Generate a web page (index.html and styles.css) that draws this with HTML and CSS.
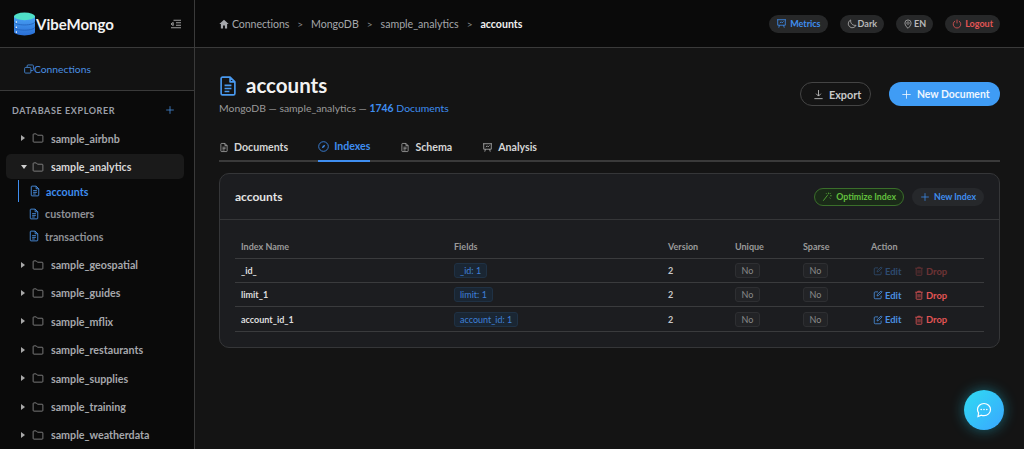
FILE: index.html
```html
<!DOCTYPE html>
<html lang="en">
<head>
    <meta charset="UTF-8">
    <meta name="viewport" content="width=device-width, initial-scale=1.0">
    <title>VibeMongo</title>
    <link rel="stylesheet" href="styles.css">
</head>
<body>
    <svg class="sprites" width="0" height="0">
        <symbol id="i-folder" viewBox="0 0 16 16"><path d="M1.5 3.500a1 1 0 0 1 1-1h3.200l1.600 1.800h6.200a1 1 0 0 1 1 1v7.200a1 1 0 0 1-1 1h-11a1 1 0 0 1-1-1z" fill="none" stroke="currentColor" stroke-width="1.100"/></symbol>
        <symbol id="i-doc" viewBox="0 0 16 16"><path d="M3 2.500a1 1 0 0 1 1-1h5.500L13 5v8.500a1 1 0 0 1-1 1H4a1 1 0 0 1-1-1zM9.500 1.500V5H13M5.500 7.500h5M5.500 9.800h5M5.500 12h3.500" fill="none" stroke="currentColor" stroke-width="1.200" stroke-linejoin="round"/></symbol>
        <symbol id="i-plus" viewBox="0 0 16 16"><path d="M8 2.500v11M2.500 8h11" fill="none" stroke="currentColor" stroke-width="1.200" stroke-linecap="round"/></symbol>
        <symbol id="i-edit" viewBox="0 0 16 16"><path d="M13 9v3.500a1.500 1.500 0 0 1-1.500 1.500h-8A1.500 1.500 0 0 1 2 12.500v-8A1.500 1.500 0 0 1 3.500 3H8M6.500 9.500l.5-2.500 6-5.500 1.500 1.500-6 6z" fill="none" stroke="currentColor" stroke-width="1.300" stroke-linejoin="round"/></symbol>
        <symbol id="i-trash" viewBox="0 0 16 16"><path d="M2 3.500h12M6 3.500V2h4v1.500M3.500 3.500V14a.8.8 0 0 0 .8.8h7.400a.8.8 0 0 0 .8-.8V3.500M6.500 6.500V12M9.500 6.500V12" fill="none" stroke="currentColor" stroke-width="1.300"/></symbol>
        <symbol id="i-board" viewBox="0 0 16 16"><path d="M1.500 2.500h13M2.500 2.500v8h11v-8M5 10.500l-1 3.500M11 10.500l1 3.500M5.500 7.500l2-2L9 7l2-2" fill="none" stroke="currentColor" stroke-width="1.200" stroke-linejoin="round"/></symbol>
    </svg>

    <!-- Sidebar -->
    <aside class="sidebar">
        <div class="brand">
            <svg class="brand-logo" viewBox="0 0 22 24" width="21" height="24">
                <defs>
                    <linearGradient id="dbBody" x1="0" y1="0" x2="0" y2="1"><stop offset="0" stop-color="#4aa3f5"/><stop offset="1" stop-color="#2a6fd6"/></linearGradient>
                </defs>
                <path d="M0 3.500v17C0 22.400 5 24 11 24s11-1.600 11-3.500v-17z" fill="url(#dbBody)"/>
                <ellipse cx="11" cy="4" rx="11" ry="4" fill="#4fe0c8"/>
                <path d="M0 9.500c0 2 5 3.500 11 3.500s11-1.500 11-3.500M0 15c0 2 5 3.500 11 3.500S22 17 22 15" fill="none" stroke="#1f5fb8" stroke-width=".8"/>
                <circle cx="2.500" cy="10" r=".8" fill="#fff"/><circle cx="2.500" cy="15.500" r=".8" fill="#fff"/><circle cx="2.500" cy="20.500" r=".8" fill="#fff"/>
            </svg>
            <span class="brand-name">VibeMongo</span>
            <svg class="brand-toggle" viewBox="0 0 16 16" width="10" height="10"><path d="M4 2h12M8 6h8M8 10h8M0 14h16M0 8l3.500-2.500v5z" fill="none" stroke="currentColor" stroke-width="1.400"/></svg>
        </div>
        <div class="side-link">
            <svg viewBox="0 0 16 16" width="10" height="10"><path d="M5 5V3a1.500 1.500 0 0 1 1.500-1.500h7A1.500 1.500 0 0 1 15 3v6a1.500 1.500 0 0 1-1.500 1.500H11M1 7a1.500 1.500 0 0 1 1.500-1.500h7A1.500 1.500 0 0 1 11 7v6a1.500 1.500 0 0 1-1.500 1.500h-7A1.500 1.500 0 0 1 1 13z" fill="none" stroke="currentColor" stroke-width="1.300"/></svg>
            <span>Connections</span>
        </div>
        <div class="explorer-head">
            <span>DATABASE EXPLORER</span>
            <svg class="explorer-add" width="10" height="10"><use href="#i-plus"/></svg>
        </div>
        <ul class="tree">
            <li class="db"><i class="caret"></i><svg width="12" height="12"><use href="#i-folder"/></svg><span>sample_airbnb</span></li>
            <li class="db db-open"><i class="caret caret-down"></i><svg width="12" height="12"><use href="#i-folder"/></svg><span>sample_analytics</span></li>
            <li class="coll coll-active"><svg width="12" height="12"><use href="#i-doc"/></svg><span>accounts</span></li>
            <li class="coll"><svg width="12" height="12"><use href="#i-doc"/></svg><span>customers</span></li>
            <li class="coll coll-last"><svg width="12" height="12"><use href="#i-doc"/></svg><span>transactions</span></li>
            <li class="db"><i class="caret"></i><svg width="12" height="12"><use href="#i-folder"/></svg><span>sample_geospatial</span></li>
            <li class="db"><i class="caret"></i><svg width="12" height="12"><use href="#i-folder"/></svg><span>sample_guides</span></li>
            <li class="db"><i class="caret"></i><svg width="12" height="12"><use href="#i-folder"/></svg><span>sample_mflix</span></li>
            <li class="db"><i class="caret"></i><svg width="12" height="12"><use href="#i-folder"/></svg><span>sample_restaurants</span></li>
            <li class="db"><i class="caret"></i><svg width="12" height="12"><use href="#i-folder"/></svg><span>sample_supplies</span></li>
            <li class="db"><i class="caret"></i><svg width="12" height="12"><use href="#i-folder"/></svg><span>sample_training</span></li>
            <li class="db"><i class="caret"></i><svg width="12" height="12"><use href="#i-folder"/></svg><span>sample_weatherdata</span></li>
        </ul>
    </aside>

    <div class="main">
        <!-- Top bar -->
        <header class="topbar">
            <nav class="crumbs">
                <svg viewBox="0 0 16 16" width="10" height="10"><path d="M8 1 .5 8H3v7h3.500v-4.500h3V15H13V8h2.500z" fill="currentColor"/></svg>
                <span class="crumb-first">Connections</span>
                <span class="sep">&gt;</span><span>MongoDB</span>
                <span class="sep">&gt;</span><span>sample_analytics</span>
                <span class="sep">&gt;</span><b>accounts</b>
            </nav>
            <div class="top-actions">
                <span class="pill pill-blue"><svg width="11" height="11"><use href="#i-board"/></svg>Metrics</span>
                <span class="pill pill-tight"><svg viewBox="0 0 16 16" width="10" height="10"><path d="M6 1.500a6.500 6.500 0 1 0 8.500 8.500A7 7 0 0 1 6 1.500z" fill="none" stroke="currentColor" stroke-width="1.200"/></svg>Dark</span>
                <span class="pill pill-tight"><svg viewBox="0 0 16 16" width="10" height="10"><path d="M8 15s5-4.500 5-8.500a5 5 0 0 0-10 0C3 10.500 8 15 8 15z" fill="none" stroke="currentColor" stroke-width="1.200"/><circle cx="8" cy="6.500" r="2" fill="none" stroke="currentColor"/></svg>EN</span>
                <span class="pill pill-red"><svg viewBox="0 0 16 16" width="10" height="10"><path d="M5 3.200a6 6 0 1 0 6 0M8 1v6" fill="none" stroke="currentColor" stroke-width="1.300"/></svg>Logout</span>
            </div>
        </header>

        <main class="content">
            <div class="page-head">
                <div>
                    <h1><svg width="22" height="22"><use href="#i-doc"/></svg>accounts</h1>
                    <p class="subtitle">MongoDB — sample_analytics — <b>1746</b> <span>Documents</span></p>
                </div>
                <div class="head-actions">
                    <button class="btn btn-outline"><svg viewBox="0 0 16 16" width="11" height="11"><path d="M8 1.500V10M4.500 6.800 8 10.300l3.500-3.500M2 14h12" fill="none" stroke="currentColor" stroke-width="1.200"/></svg>Export</button>
                    <button class="btn btn-primary"><svg width="11" height="11"><use href="#i-plus"/></svg>New Document</button>
                </div>
            </div>

            <div class="tabs">
                <span class="tab"><svg width="10" height="11"><use href="#i-doc"/></svg>Documents</span>
                <span class="tab tab-active"><svg viewBox="0 0 16 16" width="11" height="11"><circle cx="8" cy="8" r="7" fill="none" stroke="currentColor" stroke-width="1.200"/><path d="M5.500 10.500 7 7l3.500-1.500L9 9z" fill="currentColor"/></svg>Indexes</span>
                <span class="tab"><svg width="10" height="11"><use href="#i-doc"/></svg>Schema</span>
                <span class="tab"><svg width="11" height="11"><use href="#i-board"/></svg>Analysis</span>
            </div>

            <section class="card">
                <div class="card-head">
                    <h2>accounts</h2>
                    <div class="card-actions">
                        <span class="chip chip-green"><svg viewBox="0 0 16 16" width="10" height="10"><path d="M9 5 2 14M10.500 1v2.500M13 6h2.500M12.500 3 14 1.500M6.500 2 8 3.500M12 9l1.500 1.500" fill="none" stroke="currentColor" stroke-width="1.200"/></svg>Optimize Index</span>
                        <span class="chip chip-blue"><svg width="10" height="10"><use href="#i-plus"/></svg>New Index</span>
                    </div>
                </div>
                <div class="card-body">
                    <table class="idx">
                        <thead>
                            <tr><th class="c-name">Index Name</th><th class="c-fields">Fields</th><th class="c-ver">Version</th><th class="c-flag">Unique</th><th class="c-flag">Sparse</th><th>Action</th></tr>
                        </thead>
                        <tbody>
                            <tr class="locked">
                                <td class="name">_id_</td><td><span class="field">_id: 1</span></td><td>2</td><td><span class="flag">No</span></td><td><span class="flag">No</span></td>
                                <td><span class="act act-edit"><svg width="10" height="10"><use href="#i-edit"/></svg>Edit</span><span class="act act-drop"><svg width="10" height="10"><use href="#i-trash"/></svg>Drop</span></td>
                            </tr>
                            <tr>
                                <td class="name">limit_1</td><td><span class="field">limit: 1</span></td><td>2</td><td><span class="flag">No</span></td><td><span class="flag">No</span></td>
                                <td><span class="act act-edit"><svg width="10" height="10"><use href="#i-edit"/></svg>Edit</span><span class="act act-drop"><svg width="10" height="10"><use href="#i-trash"/></svg>Drop</span></td>
                            </tr>
                            <tr>
                                <td class="name">account_id_1</td><td><span class="field">account_id: 1</span></td><td>2</td><td><span class="flag">No</span></td><td><span class="flag">No</span></td>
                                <td><span class="act act-edit"><svg width="10" height="10"><use href="#i-edit"/></svg>Edit</span><span class="act act-drop"><svg width="10" height="10"><use href="#i-trash"/></svg>Drop</span></td>
                            </tr>
                        </tbody>
                    </table>
                </div>
            </section>
        </main>
    </div>

    <!-- Chat button floats over the page -->
    <button class="chat-fab">
        <svg viewBox="0 0 16 16" width="16" height="16"><path d="M8 1.500c-3.600 0-6.500 2.700-6.500 6 0 1.300.4 2.400 1.100 3.400L2 14.500l3.300-1.300c.8.300 1.700.5 2.700.5 3.600 0 6.500-2.800 6.500-6.200S11.600 1.500 8 1.500z" fill="none" stroke="#fff" stroke-width="1.200"/><circle cx="5.200" cy="7.500" r=".8" fill="#fff"/><circle cx="8" cy="7.500" r=".8" fill="#fff"/><circle cx="10.800" cy="7.500" r=".8" fill="#fff"/></svg>
    </button>
</body>
</html>
```
FILE: styles.css
```css
* {
    box-sizing: border-box;
}
html, body {
    height: 100%;
}
body {
    margin: 0;
    display: flex;
    overflow: hidden;
    background-color: #141414;
    color: #e6e6e6;
    font-family: Lato, "Liberation Sans", sans-serif;
    font-size: 11px;
}
svg {
    flex-shrink: 0;
}
.sprites {
    position: absolute;
}

/* Sidebar */
.sidebar {
    width: 195px;
    flex-shrink: 0;
    height: 100%;
    overflow: hidden;
    background-color: #0a0a0a;
    border-right: 1px solid #3a3a3a;
}
.brand {
    height: 48px;
    display: flex;
    align-items: center;
    padding: 0 14px;
    border-bottom: 1px solid #3a3a3a;
}
.brand-name {
    margin-left: 1px;
    font-size: 15px;
    font-weight: 700;
    color: #f2f2f2;
}
.brand-toggle {
    margin-left: auto;
    margin-right: -1px;
    color: #b5b5b5;
}
.side-link {
    height: 43px;
    display: flex;
    align-items: center;
    padding-left: 24px;
    color: #4a90e2;
    background-color: #121212;
    border-bottom: 1px solid #3a3a3a;
    font-size: 10.3px;
}
.explorer-head {
    display: flex;
    align-items: center;
    justify-content: space-between;
    padding: 5px 19px 0 12px;
    height: 33px;
    font-size: 9px;
    font-weight: 700;
    letter-spacing: .6px;
    color: #9a9fa8;
}
.explorer-add {
    color: #4a90e2;
}
.tree {
    list-style: none;
    margin: 0;
    padding: 0;
}
.db {
    height: 28.4px;
    margin: 0 10px 0 6px;
    padding-left: 15px;
    display: flex;
    align-items: center;
    color: #a6a8ad;
    font-size: 10.7px;
    font-weight: 700;
    border-radius: 5px;
}
.db svg {
    margin-left: 7px;
    margin-right: 7px;
    color: #8f8f8f;
}
.db-open {
    height: 25px;
    margin-top: 2px;
    color: #d8d8d8;
    background-color: #1a1a1a;
}
.caret {
    width: 0;
    height: 0;
    border-top: 3px solid transparent;
    border-bottom: 3px solid transparent;
    border-left: 4px solid #a8a8a8;
}
.caret-down {
    margin-right: -2px;
    border-left: 3px solid transparent;
    border-right: 3px solid transparent;
    border-top: 4px solid #d0d0d0;
    border-bottom: 0;
}
.coll {
    height: 22.5px;
    margin-left: 18px;
    padding-left: 10px;
    display: flex;
    align-items: center;
    gap: 5px;
    color: #8f9196;
    font-size: 10.7px;
    font-weight: 700;
}
.coll svg {
    color: #4a90e2;
}
.coll-active {
    height: 22px;
    color: #3f8ef0;
    border-left: 1px solid #3f8ef0;
    margin-top: 1px;
}
.coll-last {
    margin-bottom: 3px;
}

/* Top bar */
.main {
    flex: 1;
    min-width: 0;
    display: flex;
    flex-direction: column;
}
.topbar {
    height: 48px;
    flex-shrink: 0;
    display: flex;
    align-items: center;
    justify-content: space-between;
    padding: 0 24px;
    background-color: #0a0a0a;
    border-bottom: 1px solid #3a3a3a;
}
.crumbs {
    display: flex;
    align-items: center;
    color: #a5a7ab;
    font-size: 10.6px;
}
.crumb-first {
    margin-left: 3px;
    letter-spacing: -.1px;
}
.crumbs b {
    color: #f0f0f0;
}
.sep {
    margin: 0 8px;
    color: #8a8a8a;
    font-size: 10px;
}
.top-actions {
    display: flex;
    gap: 12px;
}
.pill {
    height: 18px;
    padding: 0 7px;
    display: flex;
    align-items: center;
    gap: 3px;
    border-radius: 9px;
    background-color: #272829;
    color: #b9b9b9;
    font-size: 9px;
    font-weight: 700;
}
.pill-blue {
    color: #3f8ef0;
}
.pill-red {
    color: #e25555;
}
.pill-tight {
    gap: 1px;
}

/* Page head */
.content {
    flex: 1;
    padding: 0 24px;
}
.page-head {
    display: flex;
    justify-content: space-between;
    padding-top: 24px;
}
h1 {
    margin: 0;
    display: flex;
    align-items: center;
    gap: 7px;
    font-size: 20.5px;
    line-height: 27px;
    font-weight: 700;
    color: #f2f2f2;
}
h1 svg {
    color: #4a9af0;
    margin-left: -2px;
}
.subtitle {
    margin: 3px 0 0;
    font-size: 10.4px;
    color: #9a9a9a;
}
.subtitle b, .subtitle span {
    color: #3f8ef0;
}
.head-actions {
    display: flex;
    gap: 18px;
    padding-top: 10px;
}
.btn {
    height: 24px;
    padding: 0 12px;
    display: flex;
    align-items: center;
    gap: 5px;
    border-radius: 12px;
    font-family: inherit;
    font-size: 10.8px;
    font-weight: 700;
    white-space: nowrap;
}
.btn-outline {
    width: 71px;
    background: transparent;
    border: 1px solid #444;
    color: #c9c9c9;
}
.btn-primary {
    width: 111px;
    background-color: #3f9cf5;
    border: none;
    color: #eef6ff;
    font-size: 10.4px;
}

/* Tabs */
.tabs {
    margin-top: 22px;
    height: 26px;
    display: flex;
    gap: 30px;
    border-bottom: 2px solid #3a3a3a;
}
.tab {
    height: 26px;
    display: flex;
    align-items: center;
    gap: 5px;
    padding-bottom: 4px;
    font-size: 10.6px;
    font-weight: 700;
    color: #d6d6d6;
}
.tab svg {
    color: #b0b0b0;
}
.tab-active, .tab-active svg {
    color: #3f8ef0;
    border-bottom: 2px solid #3f8ef0;
}
.tab-active svg {
    border-bottom: 0;
}

/* Card */
.card {
    margin-top: 11px;
    background-color: #1c1d20;
    border: 1px solid #353638;
    border-radius: 10px;
}
.card-head {
    height: 46px;
    display: flex;
    align-items: center;
    justify-content: space-between;
    padding: 0 15px;
    border-bottom: 1px solid #353638;
}
h2 {
    margin: 0;
    font-size: 12px;
    font-weight: 700;
    color: #e4e4e4;
}
.card-actions {
    display: flex;
    gap: 8px;
}
.chip {
    height: 18px;
    display: flex;
    align-items: center;
    gap: 4px;
    padding: 0 8px;
    border-radius: 9px;
    font-size: 8.8px;
    font-weight: 700;
}
.chip-green {
    padding: 0 7px;
    color: #62c03e;
    background-color: #1a2a18;
    border: 1px solid #3a6e2a;
}
.chip-blue {
    color: #3f8ef0;
    background-color: #26282b;
}
.card-body {
    padding: 15px;
}
.idx {
    width: 749px;
    table-layout: fixed;
    border-collapse: collapse;
}
.idx th, .idx td {
    padding: 0 0 0 6px;
    text-align: left;
    font-size: 9px;
    border-bottom: 1px solid #3a3b3d;
}
.idx th {
    height: 23px;
    color: #9a9a9a;
    font-weight: 700;
}
.idx td {
    height: 24px;
    padding-top: 1px;
    color: #c8c8c8;
    font-weight: 700;
}
.idx tr:last-child td {
    height: 25px;
}
.c-name {
    width: 213px;
}
.c-fields {
    width: 214px;
}
.c-ver {
    width: 67px;
}
.c-flag {
    width: 68px;
}
.idx .name {
    color: #dedede;
}
.field {
    display: inline-block;
    height: 15px;
    line-height: 13px;
    padding: 0 5px;
    border-radius: 3px;
    color: #3f80d8;
    background-color: #1a2633;
    border: 1px solid #1f3144;
    font-weight: 400;
}
.flag {
    display: inline-block;
    height: 15px;
    line-height: 13px;
    padding: 0 5.5px;
    border: 1px solid #2e2f32;
    border-radius: 3px;
    color: #8a8a8a;
    background-color: #222326;
    font-weight: 400;
}
.act {
    display: inline-flex;
    align-items: center;
    gap: 2px;
    vertical-align: middle;
    font-size: 9.4px;
}
.act-edit {
    color: #4a90e2;
    width: 41px;
    margin-left: 2px;
}
.act-drop {
    color: #e25555;
}
.locked .act {
    opacity: .4;
}

/* Chat */
.chat-fab {
    position: fixed;
    right: 20px;
    bottom: 19px;
    width: 40px;
    height: 40px;
    padding: 0;
    display: flex;
    align-items: center;
    justify-content: center;
    border: none;
    border-radius: 50%;
    background: linear-gradient(135deg, #2fdcf2, #3aa6ff);
    box-shadow: 0 0 14px rgba(30, 200, 230, .45);
}
```
